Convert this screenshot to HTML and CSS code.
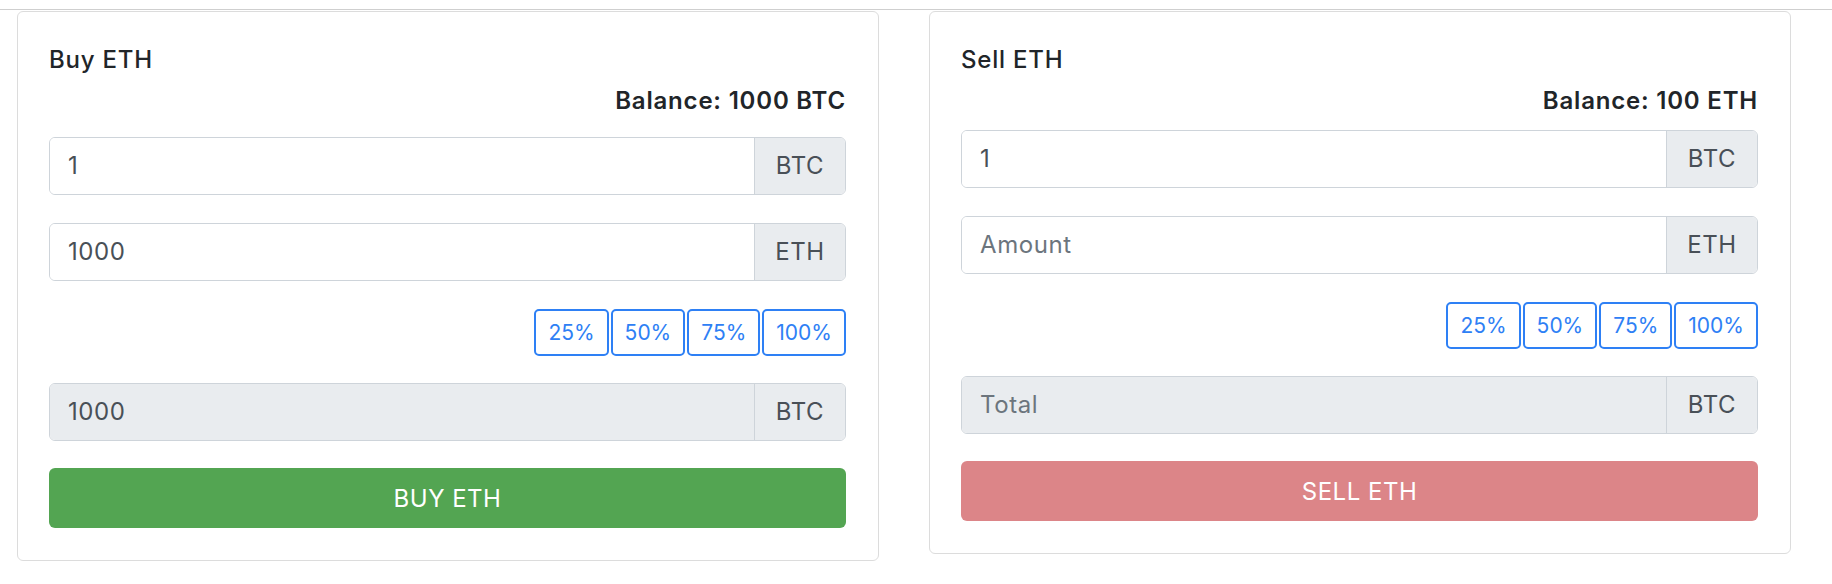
FILE: index.html
```html
<!DOCTYPE html>
<html lang="en">
<head>
<meta charset="utf-8">
<title>Trade ETH</title>
<link rel="stylesheet" href="styles.css">
</head>
<body>
<div class="topbar"></div>
<div class="row">
  <div class="card card-buy">
    <div class="card-title">Buy ETH</div>
    <div class="balance">Balance: 1000 BTC</div>
    <div class="input-group">
      <input class="form-control" type="text" value="1" readonly>
      <span class="addon">BTC</span>
    </div>
    <div class="input-group">
      <input class="form-control" type="text" value="1000" readonly>
      <span class="addon">ETH</span>
    </div>
    <div class="pct-row">
      <button class="btn-pct">25%</button>
      <button class="btn-pct">50%</button>
      <button class="btn-pct">75%</button>
      <button class="btn-pct">100%</button>
    </div>
    <div class="input-group input-group-disabled">
      <input class="form-control" type="text" value="1000" disabled>
      <span class="addon">BTC</span>
    </div>
    <button class="btn-action btn-buy">BUY ETH</button>
  </div>

  <div class="card card-sell">
    <div class="card-title">Sell ETH</div>
    <div class="balance">Balance: 100 ETH</div>
    <div class="input-group">
      <input class="form-control" type="text" value="1" readonly>
      <span class="addon">BTC</span>
    </div>
    <div class="input-group">
      <input class="form-control" type="text" placeholder="Amount" readonly>
      <span class="addon">ETH</span>
    </div>
    <div class="pct-row">
      <button class="btn-pct">25%</button>
      <button class="btn-pct">50%</button>
      <button class="btn-pct">75%</button>
      <button class="btn-pct">100%</button>
    </div>
    <div class="input-group input-group-disabled">
      <input class="form-control" type="text" placeholder="Total" disabled>
      <span class="addon">BTC</span>
    </div>
    <button class="btn-action btn-sell" disabled>SELL ETH</button>
  </div>
</div>
</body>
</html>
```

FILE: styles.css
```css
* {
  box-sizing: border-box;
}

html, body {
  margin: 0;
  padding: 0;
  background: #ffffff;
}

body {
  font-family: Inter, "Noto Sans", "Liberation Sans", sans-serif;
  font-size: 24px;
  line-height: 36px;
  color: #212529;
}

.topbar {
  height: 10px;
  border-bottom: 1px solid #cfcfcf;
}

.row {
  display: flex;
  align-items: flex-start;
  gap: 50px;
  padding: 1px 0 0 17px;
}

.card {
  width: 862px;
  border: 1px solid #dcdcdc;
  border-radius: 6px;
  padding: 30px 32px 32px 31px;
  display: flex;
  flex-direction: column;
}

.card-title {
  font-weight: 500;
  letter-spacing: 0.8px;
  margin-bottom: 5px;
}

.balance {
  font-weight: 600;
  letter-spacing: 0.8px;
  text-align: right;
  margin-bottom: 18px;
}

.card-sell .balance {
  margin-bottom: 11px;
}

.input-group {
  display: flex;
  height: 58px;
  border: 1px solid #ced4da;
  border-radius: 6px;
  overflow: hidden;
  margin-bottom: 28px;
}

.form-control {
  flex: 1;
  min-width: 0;
  border: 0;
  outline: none;
  margin: 0;
  padding: 0 18px;
  font: inherit;
  letter-spacing: 0.6px;
  color: #495057;
  background: #ffffff;
}

.form-control::placeholder {
  color: #6c757d;
  opacity: 1;
}

.input-group-disabled {
  margin-bottom: 27px;
}

.input-group-disabled .form-control {
  background: #e9ecef;
}

.addon {
  width: 91px;
  flex: none;
  display: flex;
  align-items: center;
  justify-content: center;
  background: #e9ecef;
  border-left: 1px solid #ced4da;
  color: #495057;
  letter-spacing: 0.6px;
}

.pct-row {
  display: flex;
  justify-content: flex-end;
  gap: 2px;
  margin-bottom: 27px;
}

.btn-pct {
  height: 47px;
  padding: 0 12px;
  border: 2px solid #2e80f5;
  border-radius: 5px;
  background: #ffffff;
  color: #2e80f5;
  font-family: inherit;
  font-size: 21px;
  line-height: 1;
}

.btn-action {
  height: 60px;
  border: 0;
  border-radius: 6px;
  font-family: inherit;
  font-size: 24px;
  letter-spacing: 0.5px;
  color: #ffffff;
  width: 100%;
}

.btn-buy {
  background: #53a552;
}

.btn-sell {
  background: #dc8588;
}
```
